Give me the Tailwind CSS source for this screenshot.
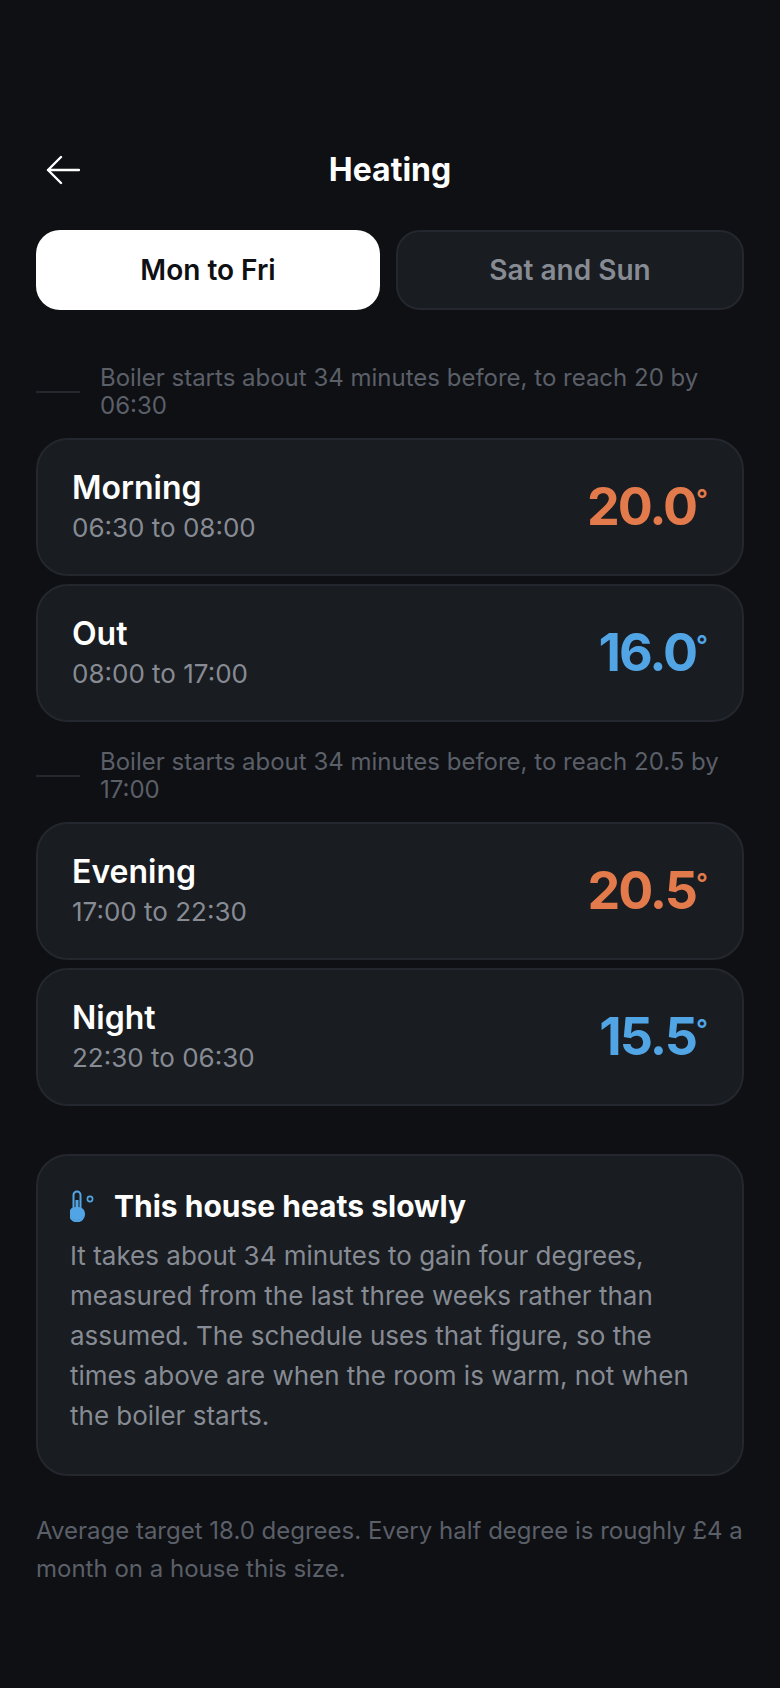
<!DOCTYPE html>
<html lang="en">
<head>
<meta charset="utf-8">
<script src="https://cdn.jsdelivr.net/npm/@tailwindcss/browser@4"></script>
<title>Heating</title>
</head>
<body class="bg-[#0e1014] font-['Inter',sans-serif]">
<div class="w-[780px] h-[1688px] px-9 pt-[140px] overflow-hidden">
  <header class="relative flex items-center justify-center h-[60px]">
    <svg class="absolute left-[10px] top-[13px]" width="34" height="34" viewBox="0 0 34 34" fill="none" stroke="#fff" stroke-width="2.4" stroke-linecap="round" stroke-linejoin="round"><path d="M33 17H2M15 4 2 17l13 13"/></svg>
    <h1 class="text-[32px] font-bold text-white leading-[40px]">Heating</h1>
  </header>
  <div class="flex gap-4 mt-[30px]">
    <div class="flex-1 h-20 rounded-[24px] bg-white flex items-center justify-center text-[28px] font-semibold text-[#0e1014]">Mon to Fri</div>
    <div class="flex-1 h-20 rounded-[24px] bg-[#191c20] border-2 border-[#24282e] flex items-center justify-center text-[28px] font-semibold text-[#878b94]">Sat and Sun</div>
  </div>
  <div class="flex items-center gap-5 mt-[54px]">
    <div class="w-11 h-0.5 shrink-0 bg-[#24282e]"></div>
    <p class="text-[24px] leading-[28px] text-[#5b5f68]">Boiler starts about 34 minutes before, to reach 20 by 06:30</p>
  </div>
  <div class="flex flex-col gap-2 mt-[18px]">
    <div class="h-[138px] rounded-[32px] bg-[#191c20] border-2 border-[#24282e] px-[34px] flex items-center justify-between">
      <div><div class="text-[32px] leading-[40px] font-semibold text-white">Morning</div><div class="text-[26px] leading-[36px] mt-0.5 text-[#878b94]">06:30 to 08:00</div></div>
      <div class="flex items-start text-[52px] leading-[56px] font-bold tracking-[-2px] text-[#e27a4c]">20.0<span class="text-[26px] leading-[40px] font-semibold tracking-normal">°</span></div>
    </div>
    <div class="h-[138px] rounded-[32px] bg-[#191c20] border-2 border-[#24282e] px-[34px] flex items-center justify-between">
      <div><div class="text-[32px] leading-[40px] font-semibold text-white">Out</div><div class="text-[26px] leading-[36px] mt-0.5 text-[#878b94]">08:00 to 17:00</div></div>
      <div class="flex items-start text-[52px] leading-[56px] font-bold tracking-[-2px] text-[#52a5e5]">16.0<span class="text-[26px] leading-[40px] font-semibold tracking-normal">°</span></div>
    </div>
  </div>
  <div class="flex items-center gap-5 mt-[26px]">
    <div class="w-11 h-0.5 shrink-0 bg-[#24282e]"></div>
    <p class="text-[24px] leading-[28px] text-[#5b5f68]">Boiler starts about 34 minutes before, to reach 20.5 by 17:00</p>
  </div>
  <div class="flex flex-col gap-2 mt-[18px]">
    <div class="h-[138px] rounded-[32px] bg-[#191c20] border-2 border-[#24282e] px-[34px] flex items-center justify-between">
      <div><div class="text-[32px] leading-[40px] font-semibold text-white">Evening</div><div class="text-[26px] leading-[36px] mt-0.5 text-[#878b94]">17:00 to 22:30</div></div>
      <div class="flex items-start text-[52px] leading-[56px] font-bold tracking-[-2px] text-[#e27a4c]">20.5<span class="text-[26px] leading-[40px] font-semibold tracking-normal">°</span></div>
    </div>
    <div class="h-[138px] rounded-[32px] bg-[#191c20] border-2 border-[#24282e] px-[34px] flex items-center justify-between">
      <div><div class="text-[32px] leading-[40px] font-semibold text-white">Night</div><div class="text-[26px] leading-[36px] mt-0.5 text-[#878b94]">22:30 to 06:30</div></div>
      <div class="flex items-start text-[52px] leading-[56px] font-bold tracking-[-2px] text-[#52a5e5]">15.5<span class="text-[26px] leading-[40px] font-semibold tracking-normal">°</span></div>
    </div>
  </div>
  <section class="mt-[48px] h-[322px] rounded-[32px] bg-[#191c20] border-2 border-[#24282e] px-[32px] pt-[30px]">
    <div class="flex items-center gap-[18px]">
      <svg width="26" height="32" viewBox="0 0 26 32" fill="none"><path d="M7 1.5a3.5 3.5 0 0 1 3.5 3.5v13.2a7 7 0 1 1-7 0V5A3.5 3.5 0 0 1 7 1.5Z" fill="#191c20" stroke="#52a5e5" stroke-width="2"/><circle cx="7" cy="23.5" r="6.8" fill="#52a5e5"/><rect x="5.5" y="10" width="3" height="12" fill="#52a5e5"/><circle cx="20" cy="9" r="2.6" stroke="#52a5e5" stroke-width="1.6"/></svg>
      <h2 class="text-[30px] leading-[40px] font-bold text-white">This house heats slowly</h2>
    </div>
    <p class="mt-[10px] text-[26px] leading-[40px] text-[#878b94]">It takes about 34 minutes to gain four degrees, measured from the last three weeks rather than assumed. The schedule uses that figure, so the times above are when the room is warm, not when the boiler starts.</p>
  </section>
  <p class="mt-[36px] text-[24px] leading-[38px] text-[#5b5f68]">Average target 18.0 degrees. Every half degree is roughly £4 a month on a house this size.</p>
</div>
</body>
</html>
